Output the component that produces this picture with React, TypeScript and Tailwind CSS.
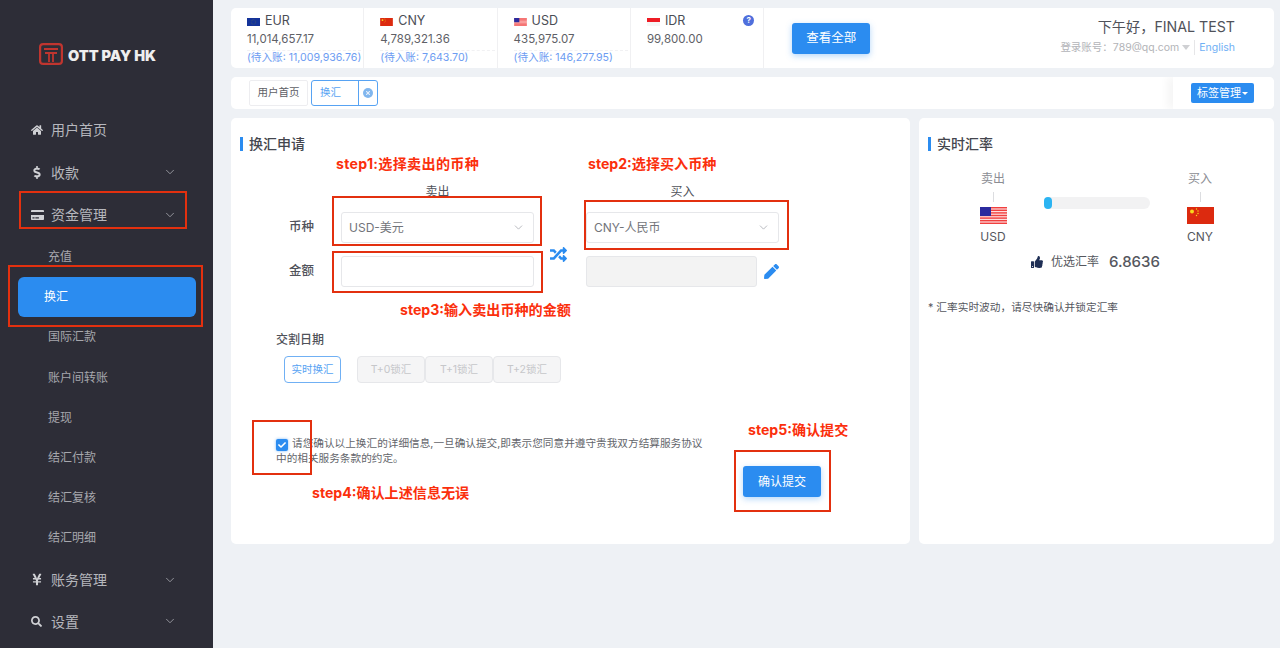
import React from "react";
import { ChevronDown } from "lucide-react";
import {
  FaCheck,
  FaCreditCard,
  FaDollarSign,
  FaHome,
  FaPen,
  FaRandom,
  FaSearch,
  FaThumbsUp,
  FaTimes,
  FaYenSign,
} from "react-icons/fa";

function FlagEU({ className }: { className?: string }) {
  return (
    <svg viewBox="0 0 26 16" className={className}>
      <rect width="26" height="16" fill="#14339a" />
      <circle cx="13" cy="8" r="4.5" fill="none" stroke="#8a8f3a" strokeWidth="1" strokeDasharray="1 1.4" />
    </svg>
  );
}

function FlagCN({ className }: { className?: string }) {
  return (
    <svg viewBox="0 0 27 17" className={className}>
      <rect width="27" height="17" fill="#dc2a0f" />
      <circle cx="5" cy="4.5" r="2" fill="#f8d81c" />
      <circle cx="9.5" cy="2" r="0.7" fill="#f8d81c" />
      <circle cx="11" cy="4" r="0.7" fill="#f8d81c" />
      <circle cx="11" cy="6.5" r="0.7" fill="#f8d81c" />
      <circle cx="9.5" cy="8.5" r="0.7" fill="#f8d81c" />
    </svg>
  );
}

function FlagUS({ className }: { className?: string }) {
  const stripes = [0, 2.6, 5.2, 7.8, 10.4, 13, 15.6];
  return (
    <svg viewBox="0 0 27 17" className={className}>
      <rect width="27" height="17" fill="#ffdede" />
      {stripes.map((y) => (
        <rect key={y} y={y} width="27" height="1.4" fill="#f0403f" />
      ))}
      <rect width="11" height="9" fill="#2b2a9e" />
    </svg>
  );
}

function FlagID({ className }: { className?: string }) {
  return (
    <svg viewBox="0 0 26 16" className={className}>
      <rect width="26" height="16" fill="#f6f6f6" />
      <rect width="26" height="8" fill="#ee1c25" />
    </svg>
  );
}

function LogoMark() {
  return (
    <svg viewBox="0 0 24 22" className="w-6 h-[22px]">
      <rect x="1.1" y="1.1" width="21.8" height="19.8" rx="3" fill="none" stroke="#c0352f" strokeWidth="2.2" />
      <path d="M5 6h14M6 10h12M10 10v9M14 10v9" fill="none" stroke="#c0352f" strokeWidth="1.8" />
    </svg>
  );
}

function NavItem({ icon, label, arrow = true }: { icon: React.ReactNode; label: string; arrow?: boolean }) {
  return (
    <div className="flex items-center h-[42.5px] text-[14px] text-[#b6b7bd]">
      <span className="w-[51px] pl-[31px] flex items-center text-[#d0d1d5]">{icon}</span>
      <span>{label}</span>
      {arrow && <ChevronDown className="ml-auto mr-[36px] w-[14px] h-[14px] text-[#a0a1a8]" strokeWidth={1.5} />}
    </div>
  );
}

function SubItem({ label, active = false }: { label: string; active?: boolean }) {
  if (active) {
    return (
      <div className="h-[40.2px] ml-[18px] mr-[17px] pl-[26px] flex items-center rounded-[6px] bg-[#2b8cf0] text-[12px] text-white">
        {label}
      </div>
    );
  }
  return <div className="h-[40.2px] pl-[48px] flex items-center text-[12px] text-[#a6a7ad]">{label}</div>;
}

function Sidebar() {
  return (
    <aside className="w-[213px] shrink-0 bg-[#2d2d37]">
      <div className="h-[108.5px] pl-[39px] flex items-center gap-[5px]">
        <LogoMark />
        <span className="pt-[3px] text-[14.5px] font-black text-[#eeeeee] whitespace-nowrap">OTT PAY HK</span>
      </div>
      <NavItem icon={<FaHome className="w-3 h-3" />} label="用户首页" arrow={false} />
      <NavItem icon={<FaDollarSign className="w-3 h-[13px]" />} label="收款" />
      <NavItem icon={<FaCreditCard className="w-[13px] h-3" />} label="资金管理" />
      <div className="pt-[1px]">
        <SubItem label="充值" />
        <SubItem label="换汇" active />
        <SubItem label="国际汇款" />
        <SubItem label="账户间转账" />
        <SubItem label="提现" />
        <SubItem label="结汇付款" />
        <SubItem label="结汇复核" />
        <SubItem label="结汇明细" />
      </div>
      <NavItem icon={<FaYenSign className="w-3 h-[13px]" />} label="账务管理" />
      <div className="-mt-px">
        <NavItem icon={<FaSearch className="w-[11px] h-[11px]" />} label="设置" />
      </div>
    </aside>
  );
}

function BalanceCell({
  flag,
  code,
  amount,
  pending,
  help = false,
}: {
  flag: React.ReactNode;
  code: string;
  amount: string;
  pending?: string;
  help?: boolean;
}) {
  return (
    <div className="relative w-[133.3px] h-full pl-4 pt-[6px] border-r border-[#f0f0f2] whitespace-nowrap">
      <div className="flex items-center gap-[5px] h-[15px] text-[12.5px] text-[#4a4d55]">
        {flag}
        <span>{code}</span>
      </div>
      <div className="mt-[3px] h-[15px] leading-[15px] text-[11.5px] text-[#5e6066]">{amount}</div>
      {pending && (
        <div className="mt-[3px] mr-[2px] border-t border-dashed border-[#f1f1f3] h-[15px] leading-[13px] text-[10.6px] text-[#6c9cf2]">
          (待入账: {pending})
        </div>
      )}
      {help && (
        <span className="absolute right-[9px] top-[7px] w-[11px] h-[11px] rounded-full bg-[#4f6fdc] text-white text-[8px] leading-[11px] font-bold text-center">
          ?
        </span>
      )}
    </div>
  );
}

function TopBar() {
  return (
    <div className="h-[60px] flex items-stretch rounded-[5px] bg-white overflow-hidden">
      <BalanceCell flag={<FlagEU className="w-[13px] h-2" />} code="EUR" amount="11,014,657.17" pending="11,009,936.76" />
      <BalanceCell flag={<FlagCN className="w-[13px] h-2" />} code="CNY" amount="4,789,321.36" pending="7,643.70" />
      <BalanceCell flag={<FlagUS className="w-[13px] h-2" />} code="USD" amount="435,975.07" pending="146,277.95" />
      <BalanceCell flag={<FlagID className="w-[13px] h-2" />} code="IDR" amount="99,800.00" help />
      <div className="flex items-center pl-7">
        <button className="w-[78px] h-[31px] rounded-[3px] bg-[#2b8cf0] text-white text-[12.5px] shadow-[0_2px_6px_rgba(43,140,240,0.35)]">
          查看全部
        </button>
      </div>
      <div className="ml-auto pr-[39px] pt-[10px] flex flex-col items-end">
        <div className="h-[17px] leading-[17px] text-[14.2px] text-[#50525a]">下午好，FINAL TEST</div>
        <div className="mt-[5px] flex items-center h-[15px] text-[10.5px] text-[#b3b4b8]">
          <span>登录账号：789@qq.com</span>
          <span className="ml-[3px] mr-[4px] w-0 h-0 border-x-[4px] border-x-transparent border-t-[5px] border-t-[#cfd0d3]" />
          <span className="pl-[4px] border-l border-[#e6e6e8] text-[#6fb0f5]">English</span>
        </div>
      </div>
    </div>
  );
}

function TabBar() {
  return (
    <div className="mt-[9px] h-8 flex items-center rounded-[5px] bg-white overflow-hidden">
      <div className="ml-[18px] w-[59px] h-[26px] flex items-center justify-center rounded-[2px] border border-[#ededf0] text-[10.5px] text-[#5e6066]">
        用户首页
      </div>
      <div className="ml-[3px] w-[67px] h-[26px] flex items-center rounded-[3px] border border-[#57a3f3] text-[10.5px] text-[#57a3f3]">
        <span className="w-[46px] pl-2">换汇</span>
        <span className="flex-1 h-full border-l border-[#57a3f3] flex items-center justify-center">
          <span className="w-[10px] h-[10px] rounded-full bg-[#80b6ee] flex items-center justify-center">
            <FaTimes className="w-[6px] h-[6px] text-[#e6f0fb]" />
          </span>
        </span>
      </div>
      <div className="ml-auto h-full w-[101px] pl-[18px] flex items-center bg-white shadow-[-6px_0_8px_rgba(0,0,0,0.04)]">
        <button className="w-[63px] h-5 rounded-[2px] bg-[#2b8cf0] flex items-center justify-center text-[11px] text-white">
          标签管理
          <span className="ml-[1px] w-0 h-0 border-x-[3px] border-x-transparent border-t-[3px] border-t-white" />
        </button>
      </div>
    </div>
  );
}

function CardTitle({ children }: { children: React.ReactNode }) {
  return (
    <div className="h-5 pb-[1px] flex items-center gap-[6px] text-[14px] font-medium text-[#44464e]">
      <span className="w-[3px] h-[14px] bg-[#2b8cf0]" />
      {children}
    </div>
  );
}

function SelectBox({ label }: { label: string }) {
  return (
    <div className="h-[31px] pl-[7px] pr-2 flex items-center justify-between rounded-[3px] border border-[#e6e7ea] bg-white text-[12px] text-[#72747a]">
      <span>{label}</span>
      <ChevronDown className="w-[13px] h-[13px] text-[#a9abb1]" strokeWidth={1.5} />
    </div>
  );
}

const settleOptions = ["T+0锁汇", "T+1锁汇", "T+2锁汇"];

function ExchangeCard() {
  return (
    <section className="w-[679px] h-[426px] rounded-[5px] bg-white pt-4 pl-[9px]">
      <CardTitle>换汇申请</CardTitle>
      <div className="ml-9">
        <div className="mt-[31px] grid grid-cols-[65px_193px_52px_193px_30px] grid-rows-[14px_31px_31px] gap-y-[13px] text-[12px] text-[#50525a]">
          <div />
          <div className="text-center leading-[14px]">卖出</div>
          <div />
          <div className="text-center leading-[14px]">买入</div>
          <div />

          <div className="pl-[13px] pb-[1px] flex items-center font-medium text-[12.5px]">币种</div>
          <SelectBox label="USD-美元" />
          <div className="row-span-2 flex items-center justify-center pr-[3px] pt-[9px]">
            <FaRandom className="w-[19px] h-[17px] text-[#2b8cf0]" />
          </div>
          <SelectBox label="CNY-人民币" />
          <div />

          <div className="pl-[13px] pb-[1px] flex items-center font-medium text-[12.5px]">金额</div>
          <div className="rounded-[3px] border border-[#e6e7ea] bg-white" />
          <div className="flex gap-[7px] col-span-2">
            <div className="w-[171px] rounded-[3px] border border-[#e6e7ea] bg-[#f3f3f3]" />
            <div className="flex items-center">
              <FaPen className="w-[15px] h-[15px] text-[#2b8cf0]" />
            </div>
          </div>
        </div>

        <div className="mt-[45px] h-4 leading-4 text-[12px] font-medium text-[#50525a]">交割日期</div>
        <div className="mt-2 ml-2 flex items-center">
          <div className="w-[57px] h-[27px] mr-4 flex items-center justify-center rounded-[4px] border border-[#70b0f4] text-[10.5px] text-[#57a3f3]">
            实时换汇
          </div>
          {settleOptions.map((opt) => (
            <div
              key={opt}
              className="w-[68px] h-[27px] flex items-center justify-center rounded-[4px] border border-[#e6e7ea] bg-[#f5f5f6] text-[10.5px] text-[#c6c7ca]"
            >
              {opt}
            </div>
          ))}
        </div>

        <div className="mt-[53px] flex items-start">
          <p className="w-[430px] text-[10.65px] leading-[15px] text-[#63656b]">
            <span className="inline-flex align-[-2px] mr-[4px] w-3 h-3 rounded-[2px] bg-[#2b8cf0] items-center justify-center shadow-[0_0_3px_rgba(43,140,240,0.6)]">
              <FaCheck className="w-2 h-2 text-white" />
            </span>
            请您确认以上换汇的详细信息,一旦确认提交,即表示您同意并遵守贵我双方结算服务协议中的相关服务条款的约定。
          </p>
          <button className="ml-[37px] mt-[30px] w-[78px] h-[31px] shrink-0 rounded-[3px] bg-[#2b8cf0] text-white text-[12px] shadow-[0_2px_6px_rgba(43,140,240,0.35)]">
            确认提交
          </button>
        </div>
      </div>
    </section>
  );
}

function RateCard() {
  return (
    <section className="flex-1 h-[426px] rounded-[5px] bg-white pt-4 pl-[9px]">
      <CardTitle>实时汇率</CardTitle>
      <div className="mt-[18px] flex items-start">
        <div className="ml-[51px] w-[28px] flex flex-col items-center text-[12px] text-[#8b8d93]">
          <span className="h-[14px] leading-[14px] whitespace-nowrap">卖出</span>
          <span className="mt-[6px] w-px h-[10px] bg-[#dcdde0]" />
          <FlagUS className="mt-[5px] w-[27px] h-[17px] shrink-0" />
          <span className="mt-[5px] leading-[15px] text-[#55575e]">USD</span>
        </div>
        <div className="ml-[37px] mt-[25px] w-[106px] h-3 rounded-full bg-[#f2f2f3]">
          <div className="w-2 h-3 rounded-full bg-[#2cb4f2]" />
        </div>
        <div className="ml-[36px] w-[28px] flex flex-col items-center text-[12px] text-[#8b8d93]">
          <span className="h-[14px] leading-[14px] whitespace-nowrap">买入</span>
          <span className="mt-[6px] w-px h-[10px] bg-[#dcdde0]" />
          <FlagCN className="mt-[5px] w-[27px] h-[17px] shrink-0" />
          <span className="mt-[5px] leading-[15px] text-[#55575e]">CNY</span>
        </div>
      </div>
      <div className="mt-[8px] ml-[103px] h-5 flex items-center text-[#55575e]">
        <FaThumbsUp className="w-3 h-3 text-[#1f2f55]" />
        <span className="ml-[8px] text-[12px]">优选汇率</span>
        <span className="ml-[10px] text-[15px] font-medium">6.8636</span>
      </div>
      <p className="mt-[29px] text-[10.7px] leading-[14px] text-[#55575e]">* 汇率实时波动，请尽快确认并锁定汇率</p>
    </section>
  );
}

// red tutorial marks pasted over the page
function Annotations() {
  const box = "absolute border-2 border-[#e3300f]";
  const note = "absolute text-[14.1px] leading-[16px] font-bold text-[#fb2f0c] whitespace-nowrap";
  return (
    <>
      <div className={`${box} left-[19px] top-[191px] w-[168px] h-[38px]`} />
      <div className={`${box} left-[8px] top-[265px] w-[195px] h-[62px]`} />
      <div className={`${box} left-[332px] top-[196px] w-[210px] h-[50px]`} />
      <div className={`${box} left-[332px] top-[251px] w-[211px] h-[42px]`} />
      <div className={`${box} left-[584px] top-[200px] w-[205px] h-[50px]`} />
      <div className={`${box} left-[252px] top-[420px] w-[60px] h-[55px]`} />
      <div className={`${box} left-[734px] top-[450px] w-[97px] h-[62px]`} />
      <span className={`${note} left-[336px] top-[156px] tracking-[0.3px]`}>step1:选择卖出的币种</span>
      <span className={`${note} left-[588px] top-[156px]`}>step2:选择买入币种</span>
      <span className={`${note} left-[400px] top-[302px]`}>step3:输入卖出币种的金额</span>
      <span className={`${note} left-[312px] top-[485px]`}>step4:确认上述信息无误</span>
      <span className={`${note} left-[748px] top-[422px]`}>step5:确认提交</span>
    </>
  );
}

export default function App() {
  return (
    <div className="relative h-[648px] flex overflow-hidden bg-[#eef1f5] font-['Inter','Noto_Sans_CJK_SC',sans-serif]">
      <Sidebar />
      <main className="flex-1 pt-2 pl-[18px] pr-[6px]">
        <TopBar />
        <TabBar />
        <div className="mt-[9px] flex gap-[9px]">
          <ExchangeCard />
          <RateCard />
        </div>
      </main>
      <Annotations />
    </div>
  );
}
